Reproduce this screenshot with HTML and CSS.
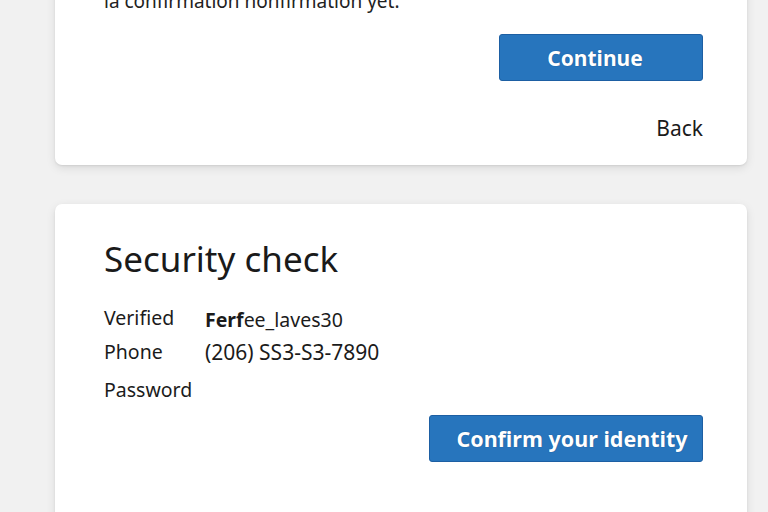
FILE: index.html
```html
<!DOCTYPE html>
<html lang="en">
<head>
<meta charset="utf-8">
<title>Security check</title>
<link rel="stylesheet" href="styles.css">
</head>
<body>
<main class="page">
  <section class="card card-top">
    <p class="note">la confirmation nonfirmation yet.</p>
    <div class="actions">
      <button class="btn btn-continue" type="button">Continue</button>
      <a class="back" href="#">Back</a>
    </div>
  </section>
  <section class="card card-security">
    <h1 class="title">Security check</h1>
    <dl class="fields">
      <dt class="label">Verified</dt>
      <dd class="value value-strong"><b>Ferf</b>ee_laves30</dd>
      <dt class="label">Phone</dt>
      <dd class="value">(206) SS3-S3-7890</dd>
      <dt class="label label-pass">Password</dt>
      <dd class="value"></dd>
    </dl>
    <div class="actions">
      <button class="btn btn-confirm" type="button">Confirm your identity</button>
    </div>
  </section>
</main>
</body>
</html>
```
FILE: styles.css
```css
* { box-sizing: border-box; }
html, body { margin: 0; padding: 0; }
body {
  background: #f1f1f1;
  font-family: "Noto Sans", "Open Sans", sans-serif;
  color: #1b1b1b;
  width: 768px;
  height: 512px;
  overflow: hidden;
}
.page {
  padding: 0 21px 0 55px;
  display: flex;
  flex-direction: column;
  gap: 39px;
}
.card {
  background: #fff;
  border-radius: 7px;
  box-shadow: 0 3px 10px rgba(0,0,0,0.10), 0 1px 2px rgba(0,0,0,0.08);
  padding: 0 44px 0 49px;
}
.card-top {
  margin-top: -32px;
  padding-top: 20px;
  padding-bottom: 24px;
}
.note {
  margin: 0;
  font-size: 19px;
  line-height: 26px;
  color: #222;
}
.actions {
  display: flex;
  flex-direction: column;
  align-items: flex-end;
}
.btn {
  font-family: "Noto Sans", "Open Sans", sans-serif;
  font-weight: 700;
  font-size: 21px;
  color: #fff;
  background: #2775bd;
  border: 1px solid #1d5fa3;
  border-radius: 3px;
  height: 47px;
  cursor: pointer;
  text-shadow: 0 0 1px rgba(0,40,90,0.6);
}
.btn-continue {
  margin-top: 20px;
  width: 204px;
  padding: 0 12px 0 0;
}
.back {
  margin-top: 34px;
  font-size: 21px;
  line-height: 26px;
  color: #1b1b1b;
  text-decoration: none;
}
.card-security {
  padding-top: 33px;
  padding-bottom: 60px;
}
.title {
  margin: 0;
  font-size: 35px;
  line-height: 44px;
  font-weight: 400;
  color: #1a1a1a;
}
.fields {
  margin: 25px 0 0;
  display: grid;
  grid-template-columns: 101px auto;
  row-gap: 10px;
  font-size: 19.5px;
  line-height: 24px;
}
.label, .value { margin: 0; }
.value { font-size: 21px; }
.value-strong { position: relative; top: 2px; font-size: 19.5px; }
.label-pass { margin-top: 4px; }
.btn-confirm {
  margin-top: 13px;
  width: 274px;
  padding: 0 0 0 12px;
  font-size: 21.5px;
}
```
